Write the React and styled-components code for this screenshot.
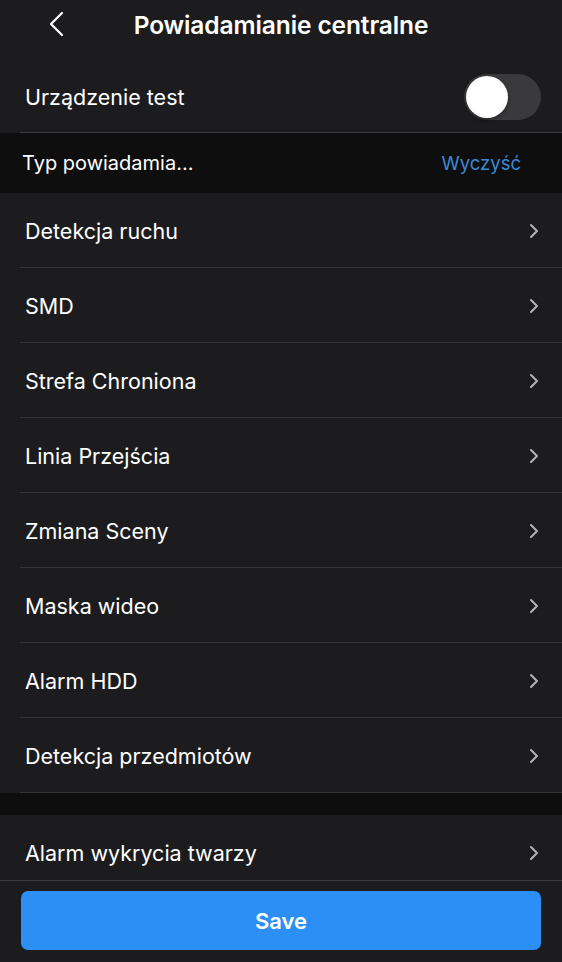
import styled, { createGlobalStyle } from 'styled-components';

const GlobalStyle = createGlobalStyle`
  html, body {
    margin: 0;
    padding: 0;
    background: #1c1c1e;
  }
  * {
    box-sizing: border-box;
  }
`;

const items = [
  'Detekcja ruchu',
  'SMD',
  'Strefa Chroniona',
  'Linia Przejścia',
  'Zmiana Sceny',
  'Maska wideo',
  'Alarm HDD',
  'Detekcja przedmiotów',
];

const Chevron = ({ size = 20, color = '#b4b4b8', width = 2 }) => (
  <svg width={size} height={size} viewBox="0 0 20 20" fill="none">
    <path d="M7 4l6 6-6 6" stroke={color} strokeWidth={width} strokeLinecap="round" strokeLinejoin="round" />
  </svg>
);

const App = () => {
  return (
    <SPage>
      <GlobalStyle />
      <SHeader>
        <SBack>
          <svg width="20" height="28" viewBox="0 0 20 28" fill="none">
            <path d="M15 3L4 14l11 11" stroke="#ffffff" strokeWidth="2.2" strokeLinecap="round" strokeLinejoin="round" />
          </svg>
        </SBack>
        <STitle>Powiadamianie centralne</STitle>
      </SHeader>

      <SBody>
        <SDeviceRow>
          <span>Urządzenie test</span>
          <SToggle>
            <div />
          </SToggle>
        </SDeviceRow>

        <SSectionHead>
          <span>Typ powiadamia...</span>
          <SClear>Wyczyść</SClear>
        </SSectionHead>

        {items.map((label) => (
          <SRow key={label}>
            <span>{label}</span>
            <Chevron />
          </SRow>
        ))}

        <SGap />

        <SRow $last>
          <span>Alarm wykrycia twarzy</span>
          <Chevron />
        </SRow>
      </SBody>

      <SFooter>
        <SSaveButton>Save</SSaveButton>
      </SFooter>
    </SPage>
  );
};

export default App;

const SPage = styled.div`
  width: 562px;
  height: 962px;
  display: flex;
  flex-direction: column;
  background-color: #1c1c1e;
  color: #ffffff;
  font-family: Inter, 'Noto Sans', 'Liberation Sans', sans-serif;
  overflow: hidden;
`;

const SHeader = styled.div`
  position: relative;
  height: 56px;
  flex-shrink: 0;
  display: flex;
  align-items: center;
  justify-content: center;
  padding-bottom: 6px;
`;

const SBack = styled.div`
  position: absolute;
  left: 47px;
  top: 10px;
  display: flex;
`;

const STitle = styled.h1`
  margin: 0;
  font-size: 24.5px;
  font-weight: 600;
  letter-spacing: -0.1px;
`;

const SBody = styled.div`
  flex: 1;
  overflow: hidden;
  display: flex;
  flex-direction: column;
`;

const SDeviceRow = styled.div`
  height: 77px;
  flex-shrink: 0;
  display: flex;
  align-items: center;
  justify-content: space-between;
  padding: 4px 21px 0 25px;
  position: relative;
  font-size: 21.5px;

  &::after {
    content: '';
    position: absolute;
    left: 20px;
    right: 0;
    bottom: 0;
    height: 1px;
    background: #3a3a3c;
  }
`;

const SToggle = styled.div`
  width: 77px;
  height: 46px;
  border-radius: 23px;
  background-color: #3a3a3d;
  padding: 2px;
  display: flex;

  > div {
    width: 42px;
    height: 42px;
    border-radius: 50%;
    background: #ffffff;
    box-shadow: 0 2px 4px rgba(0, 0, 0, 0.35);
  }
`;

const SSectionHead = styled.div`
  height: 60px;
  flex-shrink: 0;
  display: flex;
  align-items: center;
  justify-content: space-between;
  padding: 0 41px 0 22px;
  background-color: #0e0e0f;
  font-size: 20px;
`;

const SClear = styled.span`
  color: #3a8ad8;
  font-size: 18.5px;
`;

const SRow = styled.div`
  height: 75px;
  flex-shrink: 0;
  display: flex;
  align-items: center;
  justify-content: space-between;
  padding: 0 18px 0 25px;
  position: relative;
  font-size: 21.5px;

  &::after {
    content: '';
    position: absolute;
    left: 20px;
    right: 0;
    bottom: 0;
    height: 1px;
    background: ${(p) => (p.$last ? 'transparent' : '#343437')};
  }
`;

const SGap = styled.div`
  height: 22px;
  flex-shrink: 0;
  background-color: #0e0e0f;
`;

const SFooter = styled.div`
  height: 82px;
  flex-shrink: 0;
  border-top: 1px solid #3a3a3c;
  padding: 10px 21px 12px;
  background-color: #1c1c1e;
  display: flex;
`;

const SSaveButton = styled.button`
  flex: 1;
  border: none;
  border-radius: 7px;
  background-color: #2b8ff6;
  color: #ffffff;
  font-family: inherit;
  font-size: 22px;
  font-weight: 600;
  cursor: pointer;
`;
